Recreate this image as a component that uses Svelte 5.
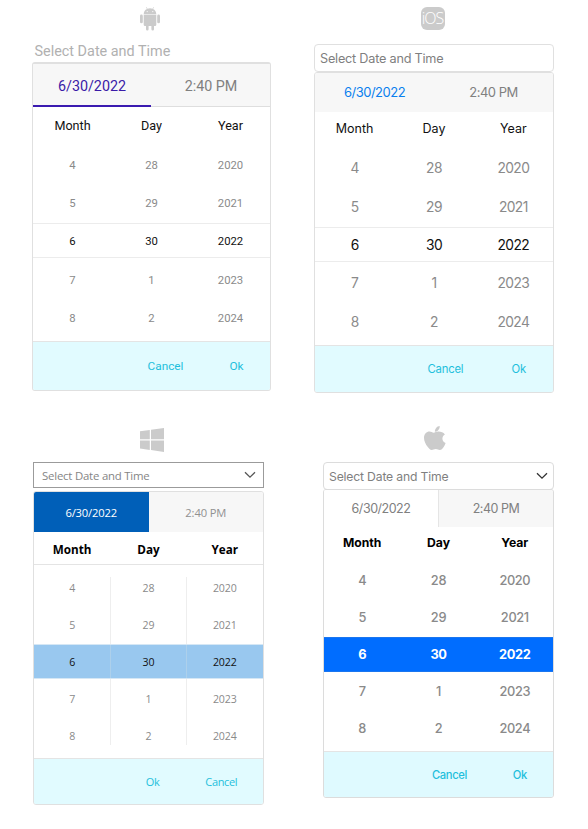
<script>
  const rows = [
    ['4', '28', '2020'],
    ['5', '29', '2021'],
    ['6', '30', '2022'],
    ['7', '1', '2023'],
    ['8', '2', '2024']
  ];
  const platforms = [
    { id: 'android', actions: ['Cancel', 'Ok'], arrow: false },
    { id: 'ios', actions: ['Cancel', 'Ok'], arrow: false },
    { id: 'windows', actions: ['Ok', 'Cancel'], arrow: true },
    { id: 'mac', actions: ['Cancel', 'Ok'], arrow: true }
  ];
</script>

<main>
  {#each platforms as p}
    <section class={p.id}>
      <div class="logo">
        {#if p.id === 'android'}
          <svg width="20" height="24" viewBox="0 0 20 24">
            <path d="M3.700 7.200C3.700 4.800 5 2.900 7 2L5.900.3l.4-.2L7.500 1.800a7 7 0 0 1 5 0L13.700.1l.4.2L13 2c2 .9 3.300 2.800 3.300 5.200z" />
            <path d="M3.700 7.700h12.600v10q0 1.300-1.300 1.300H14v3.300a1.300 1.300 0 0 1-2.600 0V19H8.600v3.300a1.300 1.300 0 0 1-2.600 0V19H5q-1.300 0-1.300-1.300z" />
            <rect x="0" y="7.500" width="2.800" height="8.800" rx="1.400" />
            <rect x="17.200" y="7.500" width="2.800" height="8.800" rx="1.400" />
            <circle cx="7.200" cy="4.600" r=".6" fill="#fff" />
            <circle cx="12.800" cy="4.600" r=".6" fill="#fff" />
          </svg>
        {:else if p.id === 'ios'}
          <span class="badge">iOS</span>
        {:else if p.id === 'windows'}
          <svg width="24" height="24" viewBox="0 0 24 24">
            <path d="M0 3.300 9.800 2v9.300H0zM11 1.800 24 0v11.300H11zM0 12.500h9.800v9.400L0 20.500zM11 12.500h13V24l-13-1.900z" />
          </svg>
        {:else}
          <svg width="22" height="24" viewBox="0 0 22 24">
            <path d="M15.700.100c.2 1.500-.4 2.900-1.300 4-.9 1-2.200 1.700-3.500 1.600-.2-1.400.5-2.800 1.300-3.800.9-1 2.300-1.700 3.500-1.800zM20.900 8.400c-1.600 1-2.500 2.400-2.500 4.200 0 2 1.200 3.700 3.200 4.500-.5 1.500-1.200 2.800-2.100 4.100-1 1.500-2.100 2.800-3.700 2.800-1.500 0-2.100-.9-4-.9-2 0-2.600.9-4.100.9-1.600 0-2.800-1.500-3.900-3C1.600 18.200 0 14.800 0 11.900c0-4 2.700-6.300 5.400-6.300 1.700 0 3.100 1.100 4.200 1.100 1.200 0 2.800-1.200 4.800-1.200 2.700 0 5 .9 6.500 2.900z" />
          </svg>
        {/if}
      </div>

      <div class="field">
        <span>Select Date and Time</span>
        {#if p.arrow}
          <svg class="chevron" width="12" height="8" viewBox="0 0 12 8">
            <path d="m1 1.200 5 5 5-5" />
          </svg>
        {/if}
      </div>

      <div class="panel">
        <div class="tabs">
          <div class="tab active"><span>6/30/2022</span></div>
          <div class="tab"><span>2:40 PM</span></div>
        </div>
        <div class="head"><span>Month</span><span>Day</span><span>Year</span></div>
        <div class="wheel">
          {#each rows as row, i}
            <div class="row" class:selected={i === 2}>
              {#each row as value}<span>{value}</span>{/each}
            </div>
          {/each}
        </div>
        <div class="footer">
          <span></span>
          {#each p.actions as action}<span class={action.toLowerCase()}>{action}</span>{/each}
        </div>
      </div>
    </section>
  {/each}
</main>

<style>
  :global(body) { background: #fff; }
  main {
    width: 588px;
    height: 829px;
    display: grid;
    grid-template-columns: 290px 298px;
    grid-template-rows: 420px 409px;
    overflow: hidden;
    background: #fff;
  }
  section, .panel, .wheel { display: flex; flex-direction: column; }
  section, .panel, .field { box-sizing: border-box; }
  span { white-space: nowrap; }
  .logo { display: flex; justify-content: center; height: 24px; fill: #cbcbcb; }
  .logo svg { display: block; }
  .field { display: flex; align-items: center; justify-content: space-between; color: #7f7f7f; }
  .chevron { fill: none; stroke: #333; stroke-width: 1.300; }
  .panel { border: 1px solid #e0e0e0; border-radius: 3px; overflow: hidden; }
  .tabs { display: flex; box-sizing: border-box; color: #808080; background: #f7f7f7; flex: none; }
  .tab { flex: 1; display: flex; align-items: center; justify-content: center; }
  .head, .row, .footer { display: grid; grid-template-columns: repeat(3, 1fr); align-items: center; text-align: center; flex: none; box-sizing: border-box; }
  .head { color: #111; }
  .row { height: var(--pitch); color: #8a8a8a; }
  .row.selected { height: 35px; margin: calc((var(--pitch) - 35px) / 2) 0; color: #111; border: solid #ececec; border-width: 1px 0; }
  .footer { background: #e1fbff; color: #1fbfdc; border-top: 1px solid #e4e4e4; flex: 1; }

  /* Android */
  .android { padding: 7px 19px 0 32px; font-family: Roboto, sans-serif; --pitch: 38.300px; }
  .android .logo { margin-right: 3px; }
  .android .field { height: 31px; padding: 9px 0 0 2.500px; font-size: 14.400px; color: #b1b1b1; flex: none; }
  .android .panel { height: 329px; border-top-width: 2px; }
  .android .tabs { height: 43px; font-size: 14.300px; }
  .android .tab { border-bottom: 1px solid #dedede; padding: 2px 0 0 1px; box-sizing: border-box; }
  .android .tab.active { color: #3a1ba8; border-bottom: 2px solid #3a1ab0; padding: 3px 0 0; }
  .android .head { height: 38px; padding-bottom: 2px; font-size: 12.600px; }
  .android .wheel { font-size: 11.300px; height: 196px; }
  .android .row { padding: 2px 0 0; }
  .android .row:not(.selected) { padding-right: 0; }
  .android .footer { font-size: 11.800px; }
  .android .cancel { padding-left: 28px; }
  .android .ok { padding-left: 12px; }

  /* iOS */
  .ios { padding: 7px 34px 0 24px; font-family: Inter, sans-serif; --pitch: 38.400px; }
  .badge { width: 24px; height: 23px; border-radius: 6px; background: #cbcbcb; color: #fff; font: 300 16px/23px "Open Sans", sans-serif; letter-spacing: -1px; text-align: center; }
  .ios .logo { margin-right: 3px; }
  .ios .field { height: 28px; margin-top: 13px; border: 1px solid #e0e0e0; border-radius: 4px; padding: 0 5px; font-size: 12.700px; letter-spacing: -.23px; flex: none; }
  .ios .panel { height: 321px; }
  .ios .tabs { height: 39px; font-size: 13px; letter-spacing: -.5px; padding-bottom: 1px; }
  .ios .tab.active { color: #0a7fee; }
  .ios .head { height: 37px; padding-bottom: 4px; font-size: 12.500px; }
  .ios .wheel { font-size: 13.800px; letter-spacing: -.6px; height: 196px; }
  .ios .footer { font-size: 11.300px; letter-spacing: -.2px; }
  .ios .cancel { padding-left: 23px; }
  .ios .ok { padding-left: 11px; }

  /* Windows */
  .windows { padding: 8px 26px 0 33px; font-family: "Open Sans", "Noto Sans", sans-serif; --pitch: 36.800px; }
  .windows .logo { margin-left: 6px; }
  .windows .field { height: 26px; margin-top: 10px; border: 1px solid #9b9b9b; padding: 0 7px 0 8px; font-size: 11.400px; letter-spacing: -.21px; color: #858585; flex: none; }
  .windows .chevron { stroke: #555; }
  .windows .panel { height: 314px; margin-top: 3px; }
  .windows .tabs { height: 40px; font-size: 11.200px; letter-spacing: -.15px; color: #919191; }
  .windows .tab.active { background: #005fb8; color: #fff; }
  .windows .head { height: 33px; border-bottom: 1px solid #e4e4e4; font-size: 11.700px; font-weight: 700; color: #000; padding-top: 1px; }
  .windows .wheel { font-size: 10.600px; letter-spacing: -.1px; height: 193px; padding-top: 5px; box-sizing: border-box; background: linear-gradient(#eee, #eee) 76px 12px / 1px 168px no-repeat, linear-gradient(#eee, #eee) 152px 12px / 1px 168px no-repeat; }
  .windows .selected { background: linear-gradient(90deg, transparent 76px, #add0eb 76px 77px, transparent 77px 152px, #add0eb 152px 153px, transparent 153px), #99c8ef; border-color: #d5e7f5; }
  .windows .footer { font-size: 11px; letter-spacing: -.35px; font-weight: 500; }
  .windows .cancel { padding-right: 7px; }
  .windows .ok { padding-left: 8px; }

  /* macOS */
  .mac { padding: 6px 34px 0 33px; font-family: Inter, sans-serif; --pitch: 37px; }
  .mac .logo { margin-right: 7px; }
  .mac .field { height: 28px; margin-top: 12px; border: 1px solid #dcdcdc; border-radius: 4px; padding: 0 5px; font-size: 12.200px; letter-spacing: -.18px; flex: none; }
  .mac .panel { height: 308px; border-color: #dcdcdc; margin-top: -1px; height: 309px; }
  .mac .tabs { height: 37px; font-size: 12.500px; letter-spacing: -.48px; }
  .mac .tab.active { background: #fff; border-right: 1px solid #e5e5e5; }
  .mac .head { height: 34px; padding-bottom: 4px; font-size: 12.200px; font-weight: 700; color: #000; }
  .mac .wheel { font-size: 12.800px; letter-spacing: -.35px; height: 190px; font-weight: 500; padding-top: 1px; box-sizing: border-box; }
  .mac .selected { background: #006dff; color: #fff; border-color: #1b76ef; font-weight: 700; }
  .mac .footer { font-size: 11.200px; letter-spacing: -.35px; font-weight: 500; background: #dffaff; }
  .mac .cancel { padding-left: 22px; }
  .mac .ok { padding-left: 10px; }
</style>
